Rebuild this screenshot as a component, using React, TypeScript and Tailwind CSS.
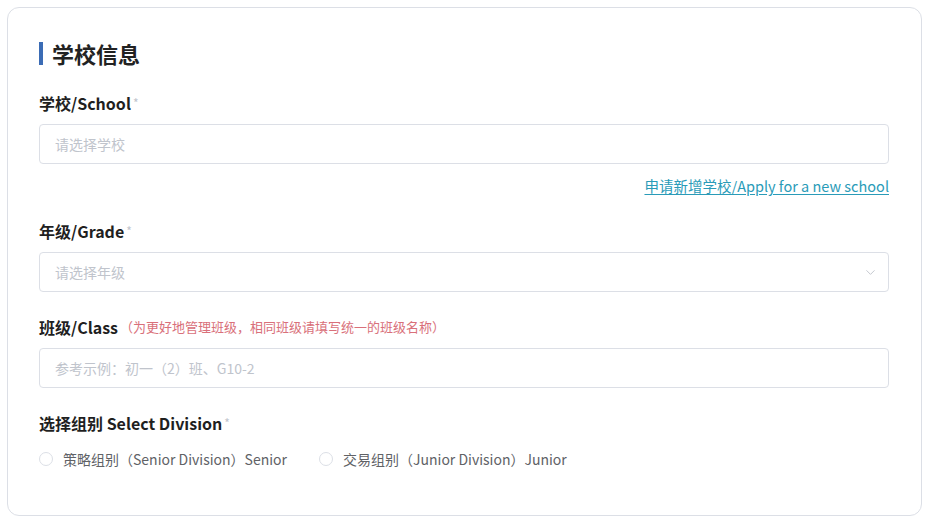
import { ChevronDown } from "lucide-react"

const font = { fontFamily: '"Noto Sans CJK SC", "Noto Sans", sans-serif' }

function Label({ text, required, hint }: { text: string; required?: boolean; hint?: string }) {
  return (
    <div className="flex items-center h-6 text-[16px] font-bold text-[#1f1f1f] leading-6">
      <span>{text}</span>
      {required && <span className="ml-[2px] text-[12px] font-normal text-[#c0c4cc]">*</span>}
      {hint && <span className="ml-[2px] text-[13px] font-normal text-[#d9707a]">{hint}</span>}
    </div>
  )
}

function Field({ placeholder, select }: { placeholder: string; select?: boolean }) {
  return (
    <div className="mt-[9px] h-10 flex items-center justify-between border border-[#dcdfe6] rounded-[4px] pl-[15px] pr-[10px]">
      <span className="text-[14px] text-[#c0c4cc]">{placeholder}</span>
      {select && <ChevronDown className="w-[15px] h-[15px] text-[#c0c4cc]" strokeWidth={1.5} />}
    </div>
  )
}

function Radio({ text }: { text: string }) {
  return (
    <label className="flex items-center gap-[10px] text-[14px] text-[#606266]">
      <span className="w-[14px] h-[14px] rounded-full border border-[#dcdfe6] bg-white" />
      <span>{text}</span>
    </label>
  )
}

export default function App() {
  return (
    <div className="w-[932px] h-[522px] bg-white p-[7px]" style={font}>
      <div className="w-[915px] h-[509px] border border-[#dcdfe6] rounded-xl bg-white pt-[33px] pl-[31px] pr-[32px]">
        <div className="flex items-center h-6 gap-[9px]">
          <div className="w-[4px] h-[23px] bg-[#3b6cb5]" />
          <h2 className="text-[22px] font-bold text-[#222] leading-6">学校信息</h2>
        </div>

        <div className="mt-[26px]">
          <Label text="学校/School" required />
          <Field placeholder="请选择学校" />
          <div className="mt-[12px] flex justify-end h-5 leading-5">
            <a href="#" className="text-[14.5px] text-[#2a9bb8] underline underline-offset-2">
              申请新增学校/Apply for a new school
            </a>
          </div>
        </div>

        <div className="mt-[23px]">
          <Label text="年级/Grade" required />
          <Field placeholder="请选择年级" select />
        </div>

        <div className="mt-[23px]">
          <Label text="班级/Class" hint="（为更好地管理班级，相同班级请填写统一的班级名称）" />
          <Field placeholder="参考示例：初一（2）班、G10-2" />
        </div>

        <div className="mt-[23px]">
          <Label text="选择组别 Select Division" required />
          <div className="mt-[14px] flex items-center gap-[32px] h-5 leading-5">
            <Radio text="策略组别（Senior Division）Senior" />
            <Radio text="交易组别（Junior Division）Junior" />
          </div>
        </div>
      </div>
    </div>
  )
}
